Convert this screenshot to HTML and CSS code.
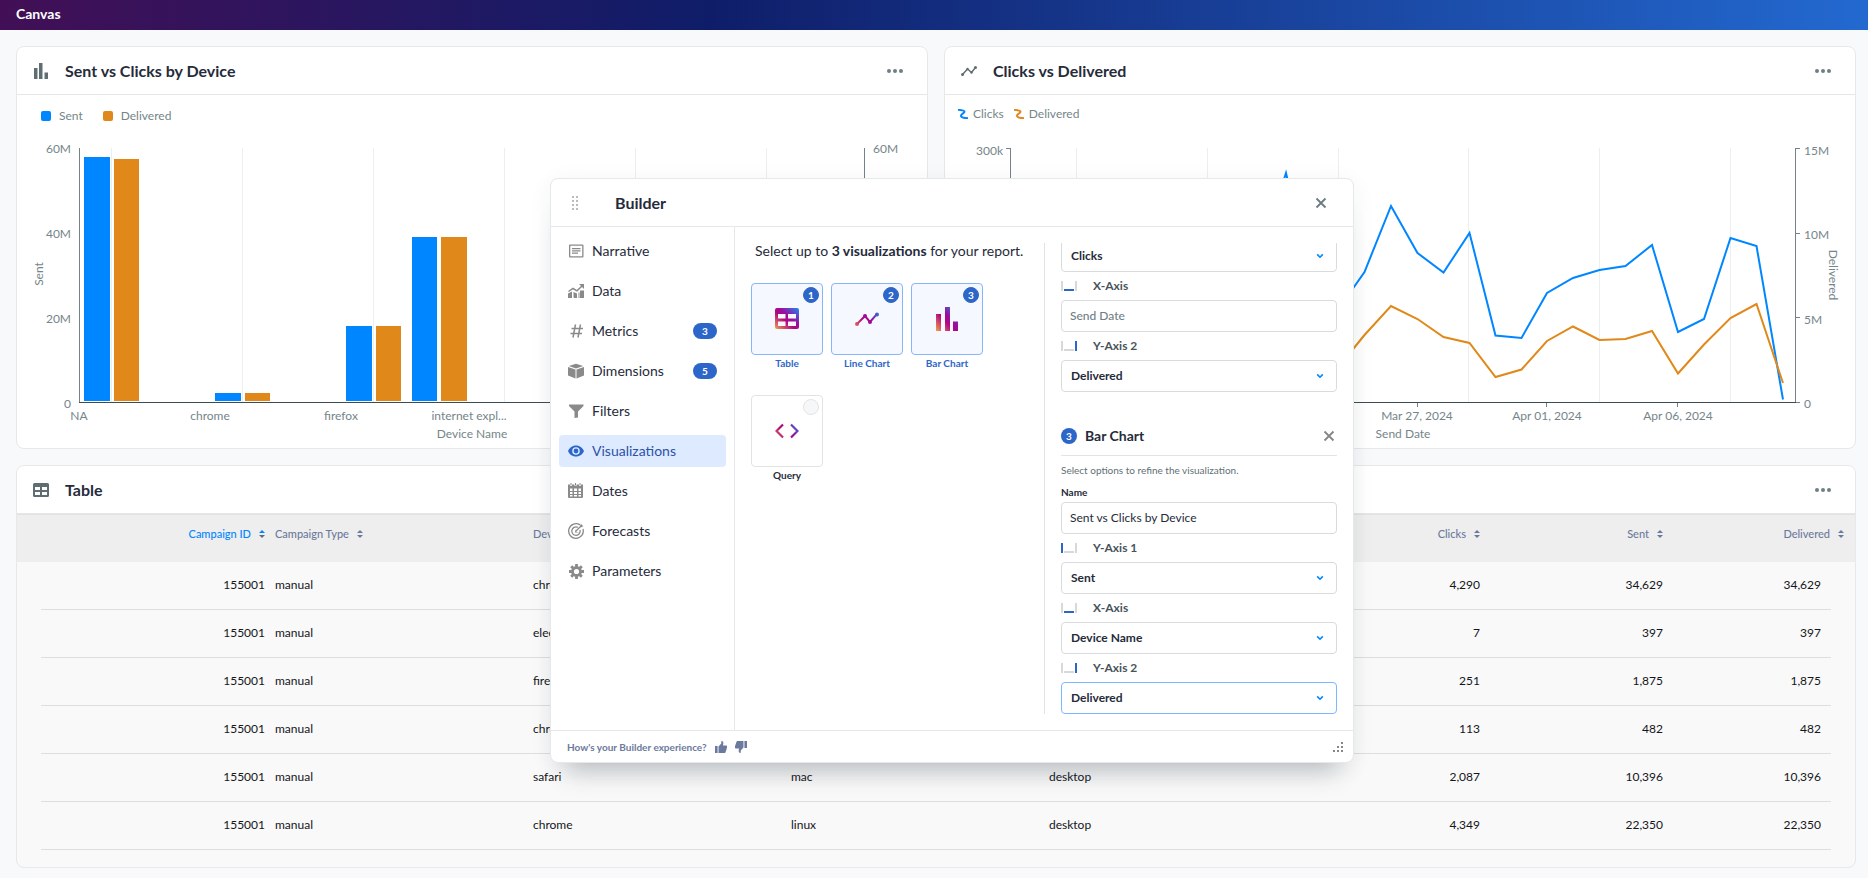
FILE: index.html
```html
<!DOCTYPE html>
<html lang="en">
<head>
<meta charset="utf-8">
<title>Canvas</title>
<link rel="stylesheet" href="styles.css">
</head>
<body>
<svg class="defs" aria-hidden="true">
  <defs>
    <linearGradient id="brand" x1="0" y1="1" x2="1" y2="0">
      <stop offset="0" stop-color="#f0a04b"/>
      <stop offset="0.42" stop-color="#b3067f"/>
      <stop offset="0.58" stop-color="#9c0c9c"/>
      <stop offset="1" stop-color="#1e88f5"/>
    </linearGradient>
    <linearGradient id="brand-wide" gradientUnits="userSpaceOnUse" x1="0" y1="22" x2="24" y2="4">
      <stop offset="0" stop-color="#e8804e"/>
      <stop offset="0.4" stop-color="#b3067f"/>
      <stop offset="0.6" stop-color="#9c0c9c"/>
      <stop offset="1" stop-color="#2b7ae6"/>
    </linearGradient>
    <symbol id="i-more" viewBox="0 0 16 4"><circle cx="2" cy="2" r="2"/><circle cx="8" cy="2" r="2"/><circle cx="14" cy="2" r="2"/></symbol>
    <symbol id="i-chevron" viewBox="0 0 8 6"><path d="M1.2 1.4 4 4.2 6.800 1.400" fill="none" stroke="currentColor" stroke-width="1.600"/></symbol>
    <symbol id="i-close" viewBox="0 0 12 12"><path d="M1.500 1.500 10.500 10.500M10.500 1.500 1.500 10.500" fill="none" stroke="currentColor" stroke-width="1.800"/></symbol>
    <symbol id="i-up" viewBox="0 0 6 3"><path d="M0 3 3 0 6 3z"/></symbol>
    <symbol id="i-down" viewBox="0 0 6 3"><path d="M0 0 3 3 6 0z"/></symbol>
  </defs>
</svg>

<header class="topbar"><h1 class="topbar-title">Canvas</h1></header>

<main class="board">
  <section class="card">
    <div class="card-head">
      <svg class="card-icon" viewBox="0 0 16 16"><path d="M1 5h3.500v11H1zM6 0h3.500v16H6zM11.500 9.500H15V16h-3.500z"/></svg>
      <h2 class="card-title">Sent vs Clicks by Device</h2>
      <button class="more" aria-label="More options"><svg class="more-icon"><use href="#i-more"/></svg></button>
    </div>
    <div class="legend legend-bars">
      <span class="key"><i class="swatch blue"></i>Sent</span>
      <span class="key"><i class="swatch orange"></i>Delivered</span>
    </div>
    <svg class="chart" viewBox="0 0 910 313" role="img" aria-label="Sent and delivered by device">
      <path class="grid" d="M94.500 13V267M225.500 13V267M356.500 13V267M487.500 13V267M618.500 13V267M749.500 13V267"/>
      <g class="bar-blue">
        <rect x="67" y="22" width="26" height="244"/><rect x="198" y="258" width="26" height="8"/>
        <rect x="329" y="191" width="26" height="75"/><rect x="395" y="102" width="25" height="164"/>
      </g>
      <g class="bar-orange">
        <rect x="97" y="24" width="25" height="242"/><rect x="228" y="258" width="25" height="8"/>
        <rect x="359" y="191" width="25" height="75"/><rect x="424" y="102" width="26" height="164"/>
      </g>
      <path class="axis" d="M62.500 13V267M847.500 13V267"/>
      <path class="base" d="M62 267.500H848"/>
      <g class="end"><text x="54" y="18">60M</text><text x="54" y="103">40M</text><text x="54" y="188">20M</text><text x="54" y="273">0</text></g>
      <text x="856" y="18">60M</text>
      <g class="mid">
        <text x="62" y="285">NA</text><text x="193" y="285">chrome</text><text x="324" y="285">firefox</text>
        <text x="452" y="285">internet expl...</text><text x="455" y="303">Device Name</text>
        <text transform="translate(26 139) rotate(-90)">Sent</text>
      </g>
    </svg>
  </section>

  <section class="card">
    <div class="card-head">
      <svg class="card-icon" viewBox="0 0 16 16"><path d="M1.500 11.500 6.500 6 10.500 9.500 14.500 4.500" fill="none" stroke="currentColor" stroke-width="1.500"/><circle cx="1.500" cy="11.500" r="1.500"/><circle cx="6.500" cy="6" r="1.200"/><circle cx="10.500" cy="9.500" r="1.200"/><circle cx="14.500" cy="4.500" r="1.500"/></svg>
      <h2 class="card-title">Clicks vs Delivered</h2>
      <button class="more" aria-label="More options"><svg class="more-icon"><use href="#i-more"/></svg></button>
    </div>
    <div class="legend legend-lines">
      <span class="key-line"><svg class="squiggle c-blue" viewBox="0 0 10 10"><path d="M0 .8C3 1 6.500 1.500 6.500 2.800 6.500 4.500 2.500 5 3 7 3.300 8.500 6 9 10 9.200"/></svg>Clicks</span>
      <span class="key-line"><svg class="squiggle c-orange" viewBox="0 0 10 10"><path d="M0 .8C3 1 6.500 1.500 6.500 2.800 6.500 4.500 2.500 5 3 7 3.300 8.500 6 9 10 9.200"/></svg>Delivered</span>
    </div>
    <svg class="chart" viewBox="0 0 910 313" role="img" aria-label="Clicks and delivered by send date">
      <path class="grid" d="M131.500 13V267M262.500 13V267M393.500 13V267M523.500 13V267M654.500 13V267M785.500 13V267"/>
      <path class="axis" d="M61 13.500H65.500V267M855 13.500H850.500V267.500H855M850.500 98.500H855M850.500 182.500H855M472.500 268V272M601.500 268V272M732.500 268V272"/>
      <path class="base" d="M65 267.500H851"/>
      <polyline class="line-blue" points="315,120 341,38 367,150 393.500,174 409,152 419.500,137 446,71 472.500,118 498.500,137.500 524.500,98 550.500,200.500 576.500,203 602,158 628,143 654.500,135 680.500,131 707,110 733,197 759,184 785.500,103 811.500,111 838,264.500"/>
      <polyline class="line-orange" points="393.500,232 419.500,200 446,171 472.500,184 498.500,202 524.500,208 550.500,242 576.500,234.500 602,206 628,191.500 654.500,205 680.500,204 707,196 733,238.500 759,209.500 785.500,183 811.500,169 838,248"/>
      <text class="end" x="58" y="20">300k</text>
      <text x="859" y="20">15M</text><text x="859" y="104">10M</text><text x="859" y="189">5M</text><text x="859" y="273">0</text>
      <g class="mid">
        <text x="472" y="285">Mar 27, 2024</text><text x="602" y="285">Apr 01, 2024</text><text x="733" y="285">Apr 06, 2024</text>
        <text x="458" y="303">Send Date</text>
        <text transform="translate(884 140) rotate(90)">Delivered</text>
      </g>
    </svg>
  </section>

  <section class="card card-table">
    <div class="card-head">
      <svg class="card-icon" viewBox="0 0 16 16"><path fill-rule="evenodd" d="M1.500 1h13A1.500 1.500 0 0 1 16 2.500v11a1.500 1.500 0 0 1-1.500 1.500h-13A1.500 1.500 0 0 1 0 13.500v-11A1.500 1.500 0 0 1 1.500 1zM2 5v3h5V5zm7 0v3h5V5zM2 10v3h5v-3zm7 0v3h5v-3z"/></svg>
      <h2 class="card-title">Table</h2>
      <button class="more" aria-label="More options"><svg class="more-icon"><use href="#i-more"/></svg></button>
    </div>
    <table class="data">
      <colgroup><col class="c-id"><col class="c-text"><col class="c-text"><col class="c-text"><col class="c-text"><col class="c-num"><col class="c-num"><col></colgroup>
      <thead><tr>
        <th class="num sorted" scope="col"><span class="th">Campaign ID<span class="sort"><svg><use href="#i-up"/></svg><svg><use href="#i-down"/></svg></span></span></th>
        <th scope="col"><span class="th">Campaign Type<span class="sort"><svg><use href="#i-up"/></svg><svg><use href="#i-down"/></svg></span></span></th>
        <th scope="col"><span class="th">Device Name<span class="sort"><svg><use href="#i-up"/></svg><svg><use href="#i-down"/></svg></span></span></th>
        <th></th>
        <th></th>
        <th class="num" scope="col"><span class="th">Clicks<span class="sort"><svg><use href="#i-up"/></svg><svg><use href="#i-down"/></svg></span></span></th>
        <th class="num" scope="col"><span class="th">Sent<span class="sort"><svg><use href="#i-up"/></svg><svg><use href="#i-down"/></svg></span></span></th>
        <th class="num last" scope="col"><span class="th">Delivered<span class="sort"><svg><use href="#i-up"/></svg><svg><use href="#i-down"/></svg></span></span></th>
      </tr></thead>
      <tbody>
        <tr><td class="num">155001</td><td>manual</td><td>chrome</td><td></td><td></td><td class="num">4,290</td><td class="num">34,629</td><td class="num last">34,629</td></tr>
        <tr><td class="num">155001</td><td>manual</td><td>electron</td><td></td><td></td><td class="num">7</td><td class="num">397</td><td class="num last">397</td></tr>
        <tr><td class="num">155001</td><td>manual</td><td>firefox</td><td></td><td></td><td class="num">251</td><td class="num">1,875</td><td class="num last">1,875</td></tr>
        <tr><td class="num">155001</td><td>manual</td><td>chrome</td><td></td><td></td><td class="num">113</td><td class="num">482</td><td class="num last">482</td></tr>
        <tr><td class="num">155001</td><td>manual</td><td>safari</td><td>mac</td><td>desktop</td><td class="num">2,087</td><td class="num">10,396</td><td class="num last">10,396</td></tr>
        <tr><td class="num">155001</td><td>manual</td><td>chrome</td><td>linux</td><td>desktop</td><td class="num">4,349</td><td class="num">22,350</td><td class="num last">22,350</td></tr>
      </tbody>
    </table>
  </section>
</main>

<div class="modal" role="dialog" aria-labelledby="builder-title">
  <div class="modal-head">
    <svg class="drag" viewBox="0 0 6 14"><path d="M0 0h2v2H0zM4 0h2v2H4zM0 4h2v2H0zM4 4h2v2H4zM0 8h2v2H0zM4 8h2v2H4zM0 12h2v2H0zM4 12h2v2H4z"/></svg>
    <h2 class="modal-title" id="builder-title">Builder</h2>
    <button class="close" aria-label="Close builder"><svg class="close-icon"><use href="#i-close"/></svg></button>
  </div>

  <div class="modal-body">
    <nav class="side" aria-label="Builder sections">
      <button class="item"><svg viewBox="0 0 16 16"><path fill-rule="evenodd" d="M2 1.500h12.500a1 1 0 0 1 1 1v11a1 1 0 0 1-1 1H2a1 1 0 0 1-1-1v-11a1 1 0 0 1 1-1zM2.300 2.800v10.400h11.900V2.800zM4 5h8.500v1.200H4zm0 2.300h8.500v1.200H4zm0 2.300h6v1.200H4z"/></svg>Narrative</button>
      <button class="item"><svg viewBox="0 0 16 16"><path d="M0 10.500 4 8.500V15H0zM5.500 9l3.500 1.500V15H6.500a1 1 0 0 1-1-1zM10.500 9.500h1V15h-1zM12 7.500h4V15h-4z"/><path d="M.5 8.500 5 5.500l4 2.300L14 3" fill="none" stroke="currentColor" stroke-width="1.500"/><path d="M11 1h5v5z"/></svg>Data</button>
      <button class="item"><svg viewBox="0 0 16 16"><path d="M7.500 1.500 5 14.500M12.500 1.500 10 14.500M3.500 5.500h11.500M2.500 10.500h11.500" fill="none" stroke="currentColor" stroke-width="1.500"/></svg>Metrics<span class="count">3</span></button>
      <button class="item"><svg viewBox="0 0 16 16"><path d="M8 .8 15.200 3 8 5.400.8 3zM0 4l7.500 2.400V15.500L0 12.500zM16 4 8.500 6.400V15.500L16 12.500z"/></svg>Dimensions<span class="count">5</span></button>
      <button class="item"><svg viewBox="0 0 16 16"><path d="M1 1.500h14.500v1.500L10 8.500v6L6.500 15V8.500L1 3z"/></svg>Filters</button>
      <button class="item active" aria-current="page"><svg viewBox="0 0 16 16"><path fill-rule="evenodd" d="M8 2.500c4 0 6.800 2.500 8 5.500-1.200 3-4 5.500-8 5.500S1.200 11 0 8c1.200-3 4-5.500 8-5.500zm0 1.700a3.800 3.800 0 1 0 0 7.600 3.800 3.800 0 0 0 0-7.600z"/><circle cx="8" cy="8" r="2.400"/></svg>Visualizations</button>
      <button class="item"><svg viewBox="0 0 16 16"><path fill-rule="evenodd" d="M0 1.500h2V3h2V1.500h2.500V3h2V1.500H11V3h2V1.500h2V14a1 1 0 0 1-1 1H1a1 1 0 0 1-1-1zM2 5.500V8h2.500V5.500zm4 0V8h3V5.500zm4.500 0V8H13V5.500zM2 9v2h2.500V9zm4 0v2h3V9zm4.500 0v2H13V9zM2 12v1.500h2.500V12zm4 0v1.500h3V12zm4.500 0v1.500H13V12z"/><path d="M2.500 0h1v2.500h-1zM7 0h1v2.500H7zM11.500 0h1v2.500h-1z"/></svg>Dates</button>
      <button class="item"><svg viewBox="0 0 16 16"><g fill="none" stroke="currentColor" stroke-width="1.300"><path d="M12 1.900A7.300 7.300 0 1 0 15 6"/><path d="M9.800 4.400A4.200 4.200 0 1 0 12 7"/><path d="M7.500 8.500 14 2"/></g><path d="M12 3.500 13 .5 13.800 2.200 15.500 3 12.800 4.500zM7 5.500v4h4L7.500 8.500z"/></svg>Forecasts</button>
      <button class="item"><svg viewBox="0 0 16 16"><circle cx="8.500" cy="8.500" r="4" fill="none" stroke="currentColor" stroke-width="2.800"/><path d="M8.500 1v3M8.500 13v3M1 8.500h3M13 8.500h3M3.200 3.200l2 2M11.800 11.800l2 2M3.200 13.800l2-2M11.800 5.200l2-2" fill="none" stroke="currentColor" stroke-width="2.800"/></svg>Parameters</button>
    </nav>

    <div class="center">
      <p class="hint">Select up to <strong>3 visualizations</strong> for your report.</p>
      <div class="tiles">
        <button class="tile on"><span class="box"><svg viewBox="0 0 24 24"><path fill="url(#brand)" fill-rule="evenodd" d="M2 1h20a2 2 0 0 1 2 2v17a2 2 0 0 1-2 2H2a2 2 0 0 1-2-2V3a2 2 0 0 1 2-2zM3 7v4.500h7.500V7zm10 0v4.500h8V7zM3 14.500V19h7.500v-4.500zm10 0V19h8v-4.500z"/></svg><span class="pick">1</span></span>Table</button>
        <button class="tile on"><span class="box"><svg viewBox="0 0 24 24"><path d="M2 17 10 9l5 6 7-8" fill="none" stroke="url(#brand-wide)" stroke-width="2"/><g fill="url(#brand-wide)"><circle cx="2" cy="17" r="2"/><circle cx="10" cy="9" r="2"/><circle cx="15" cy="15" r="2"/><circle cx="22" cy="7.500" r="2"/></g></svg><span class="pick">2</span></span>Line Chart</button>
        <button class="tile on"><span class="box"><svg viewBox="0 0 24 24"><path fill="url(#brand)" d="M1 7h5v17H1zM10 0h5v24h-5zM18 14.500h5V24h-5z"/></svg><span class="pick">3</span></span>Bar Chart</button>
        <button class="tile"><span class="box"><svg viewBox="0 0 24 24"><path d="M8 5.500 1.500 12 8 18.500M16 5.500 22.500 12 16 18.500" fill="none" stroke="url(#brand-wide)" stroke-width="2.200"/></svg><span class="pick"></span></span>Query</button>
      </div>
    </div>

    <div class="options">
      <div class="select"><select aria-label="Line chart first axis"><option>Clicks</option></select><svg class="chev"><use href="#i-chevron"/></svg></div>
      <div class="field">
        <label class="axis-label" for="l-x"><span class="mark x"></span>X-Axis</label>
        <input class="text" id="l-x" placeholder="Send Date" disabled>
      </div>
      <div class="field">
        <label class="axis-label" for="l-y2"><span class="mark y2"></span>Y-Axis 2</label>
        <div class="select"><select id="l-y2"><option>Delivered</option></select><svg class="chev"><use href="#i-chevron"/></svg></div>
      </div>

      <div class="group-head">
        <span class="num-badge">3</span>
        <h3 class="group-title">Bar Chart</h3>
        <button class="remove" aria-label="Remove bar chart"><svg class="close-icon"><use href="#i-close"/></svg></button>
      </div>
      <p class="note">Select options to refine the visualization.</p>
      <label class="name-label" for="b-name">Name</label>
      <input class="text" id="b-name" value="Sent vs Clicks by Device">
      <div class="field">
        <label class="axis-label" for="b-y1"><span class="mark y1"></span>Y-Axis 1</label>
        <div class="select"><select id="b-y1"><option>Sent</option></select><svg class="chev"><use href="#i-chevron"/></svg></div>
      </div>
      <div class="field">
        <label class="axis-label" for="b-x"><span class="mark x"></span>X-Axis</label>
        <div class="select"><select id="b-x"><option>Device Name</option></select><svg class="chev"><use href="#i-chevron"/></svg></div>
      </div>
      <div class="field">
        <label class="axis-label" for="b-y2"><span class="mark y2"></span>Y-Axis 2</label>
        <div class="select current"><select id="b-y2"><option>Delivered</option></select><svg class="chev"><use href="#i-chevron"/></svg></div>
      </div>
    </div>
  </div>

  <div class="modal-foot">
    <span>How's your Builder experience?</span>
    <button class="thumb" aria-label="Good"><svg viewBox="0 0 12 12"><path d="M0 5h2.600v7H0zM3.500 5.500 6.300 2.500V0C8 0 8.500 1 8.300 2.500L8 4.500h3.200a.8.800 0 0 1 .8.800v1.500l-1.500 4.500a1 1 0 0 1-1 .7H3.500z"/></svg></button>
    <button class="thumb" aria-label="Bad"><svg viewBox="0 0 12 12"><path d="M12 7H9.400V0H12zM8.500 6.500 5.700 9.500V12C4 12 3.500 11 3.700 9.500L4 7.500H.8A.8.800 0 0 1 0 6.700V5.200L1.500.7a1 1 0 0 1 1-.7h6z"/></svg></button>
    <svg class="resize" viewBox="0 0 10 10"><path d="M8 0h2v2H8zM4 4h2v2H4zM8 4h2v2H8zM0 8h2v2H0zM4 8h2v2H4zM8 8h2v2H8z"/></svg>
  </div>
</div>
</body>
</html>
```

FILE: styles.css
```css
* { box-sizing: border-box; }
body {
  margin: 0;
  min-height: 100vh;
  position: relative;
  background: #f8f9fb;
  color: #262b3a;
  font-family: Lato, "Open Sans", sans-serif;
  font-size: 12px;
  line-height: 16px;
}
h1, h2, h3, p { margin: 0; }
button { margin: 0; padding: 0; border: 0; background: none; font: inherit; color: inherit; cursor: pointer; }
svg { display: block; fill: currentColor; }
.defs { position: absolute; width: 0; height: 0; }

.topbar {
  display: flex;
  align-items: center;
  height: 30px;
  padding: 0 16px 2px;
  background: linear-gradient(90deg, #420f56 0%, #0f1d69 38%, #2369d0 100%);
}
.topbar-title { color: #fff; font-size: 14px; font-weight: 700; line-height: 16px; }

.board {
  display: grid;
  grid-template-columns: 1fr 1fr;
  gap: 16px;
  padding: 16px 12px 10px 16px;
}
.card { min-width: 0; border: 1px solid #e6e8ea; border-radius: 8px; background: #fff; overflow: hidden; }
.card-head { display: flex; align-items: center; height: 48px; padding: 0 24px 0 16px; border-bottom: 1px solid #e4e6e7; }
.card-icon { width: 16px; height: 16px; color: #5f6e72; }
.card-title { flex: 1; margin-left: 16px; font-size: 16px; font-weight: 700; line-height: 20px; }
.more { display: flex; align-items: center; height: 24px; color: #6f7f84; }
.more-icon { width: 16px; height: 4px; }

.legend { display: flex; height: 40px; color: #758589; }
.legend-bars { gap: 20px; padding: 13px 24px; }
.legend-lines { gap: 10px; padding: 11px 13px; }
.key, .key-line { display: flex; align-items: center; height: 16px; }
.key { gap: 8px; }
.key-line { gap: 5px; }
.swatch { width: 10px; height: 10px; border-radius: 2px; }
.blue { background: #0086ff; }
.orange { background: #e0891a; }
.squiggle { width: 10px; height: 10px; fill: none; stroke: currentColor; stroke-width: 2; }
.c-blue { color: #0086ff; }
.c-orange { color: #e0891a; }

.chart { width: 100%; height: auto; fill: #758589; font-size: 12px; }
.grid, .axis, .base { fill: none; shape-rendering: crispEdges; }
.grid { stroke: #eceff0; }
.axis { stroke: #72838a; }
.base { stroke: #3b4d54; }
.bar-blue { fill: #0086ff; }
.bar-orange { fill: #e0891a; }
.line-blue, .line-orange { fill: none; stroke-width: 2; }
.line-blue { stroke: #0086ff; }
.line-orange { stroke: #e0891a; }
.end { text-anchor: end; }
.mid { text-anchor: middle; }

.card-table { grid-column: 1 / -1; background: #f9f9f9; padding-bottom: 17px; }
.card-table .card-head { background: #fff; }
.data { width: 100%; table-layout: fixed; border-collapse: collapse; border-spacing: 0; }
.c-id { width: 253px; }
.c-text { width: 258px; }
.c-num { width: 183px; }
.data thead { background: #eee; }
.data th { height: 48px; padding: 12px 5px 0; vertical-align: top; text-align: left; font-size: 11px; font-weight: 500; color: #6b7a9c; box-shadow: inset 0 1px #e2e2e2; }
.data td { height: 48px; padding: 0 5px 2px; color: #14161a; font-size: 12px; }
.data .num { text-align: right; }
.data th.last { padding-right: 11px; }
.data td.last { padding-right: 34px; }
.data tbody tr { background: linear-gradient(#dedede, #dedede) no-repeat 24px 100% / calc(100% - 48px) 1px; }
.th { display: inline-flex; align-items: center; gap: 8px; }
.sort { display: flex; flex-direction: column; gap: 2px; }
.sort svg { width: 6px; height: 3px; }
.data .sorted { color: #0086ff; }
.sorted .sort svg + svg { color: #5c6a8c; }

.modal {
  position: absolute;
  top: 178px;
  left: 550px;
  width: 804px;
  border: 1px solid #e6e8e9;
  border-radius: 8px;
  background: #fff;
  box-shadow: 0 24px 24px -16px rgba(40, 55, 65, 0.28), 0 4px 24px rgba(40, 55, 65, 0.06);
}
.modal-head { display: flex; align-items: center; height: 48px; padding: 0 26px 0 21px; border-bottom: 1px solid #e6e8e9; }
.drag { width: 6px; height: 14px; color: #bcbcbc; }
.modal-title { flex: 1; margin-left: 37px; font-size: 16px; font-weight: 700; line-height: 20px; }
.close { color: #6b7c80; }
.close-icon { width: 12px; height: 12px; }

.modal-body { display: flex; height: 503px; }
.side { display: flex; flex-direction: column; gap: 8px; flex: 0 0 184px; padding: 8px; border-right: 1px solid #e6e8e9; }
.item { display: flex; align-items: center; gap: 8px; height: 32px; padding: 0 9px; border-radius: 4px; font-size: 14px; text-align: left; }
.item svg { width: 16px; height: 16px; color: #8a8a8a; }
.item.active { background: #deeaff; color: #2b52a5; }
.item.active svg { color: #2d66c9; }
.count { margin-left: auto; width: 24px; height: 16px; border-radius: 8px; background: #2d66c9; color: #fff; font-size: 10px; font-weight: 700; text-align: center; }

.center { flex: 1; padding: 16px; }
.hint { padding-left: 4px; font-size: 14px; white-space: nowrap; }
.hint strong { font-weight: 700; }
.tiles { display: grid; grid-template-columns: repeat(3, 72px); gap: 24px 8px; margin-top: 24px; }
.tile { display: flex; flex-direction: column; align-items: center; font-size: 10px; font-weight: 700; }
.tile.on { color: #2d66c9; }
.box { position: relative; display: flex; align-items: center; justify-content: center; width: 72px; height: 72px; border: 1px solid #e2e3e4; border-radius: 4px; }
.on .box { border-color: #86b5fa; background: #f5f8ff; }
.box svg { width: 24px; height: 24px; }
.pick { position: absolute; top: 3px; right: 3px; width: 16px; height: 16px; border: 1px solid #e2e4e6; border-radius: 8px; background: #f6f7f8; line-height: 14px; text-align: center; }
.on .pick { border-color: #2d66c9; background: #2d66c9; color: #fff; }

.options { display: flex; flex-direction: column; justify-content: flex-end; flex: 0 0 309px; margin: 16px 0; padding: 0 16px; border-left: 1px solid #e0e2e3; overflow: hidden; }
.options > * { flex-shrink: 0; }
.axis-label { display: flex; align-items: center; height: 28px; gap: 16px; font-weight: 700; color: #47545a; }
.mark { position: relative; width: 16px; height: 10px; border: solid #d8d8d8; border-width: 0 2px; }
.mark::after { content: ""; position: absolute; left: 1px; right: 1px; bottom: 0; height: 2px; background: #d8d8d8; }
.mark.y1 { border-left-color: #2d66c9; }
.mark.y2 { border-right-color: #2d66c9; }
.mark.x::after { background: #2d66c9; }
.select { position: relative; }
.select select, .text {
  display: block;
  width: 100%;
  height: 32px;
  border: 1px solid #d9dbdc;
  border-radius: 4px;
  background: #fff;
  color: #262b3a;
  font: 400 12px/16px Lato, "Open Sans", sans-serif;
}
.select select { appearance: none; padding: 0 32px 1px 9px; font-weight: 700; }
.text { padding: 0 8px 2px; }
.text:disabled { font-weight: 500; }
.text::placeholder { color: #6f8085; opacity: 1; }
.current select { border-color: #7ab8ff; }
.chev { position: absolute; top: 13px; right: 13px; width: 8px; height: 6px; color: #0086ff; }
.group-head { display: flex; align-items: center; height: 40px; margin-top: 24px; border-bottom: 1px solid #e2e4e5; }
.num-badge { width: 16px; height: 16px; border-radius: 8px; background: #2d66c9; color: #fff; font-size: 10px; font-weight: 700; text-align: center; }
.group-title { flex: 1; margin-left: 8px; font-size: 14px; font-weight: 700; line-height: 16px; }
.remove { margin-right: 2px; color: #868686; }
.note { margin-top: 6px; font-size: 10px; color: #5f7075; }
.name-label { margin: 6px 0 2px; font-size: 10px; font-weight: 700; }

.modal-foot { display: flex; align-items: center; gap: 8px; height: 32px; padding: 0 10px 0 16px; border-top: 1px solid #e6e8e9; color: #6b7a9c; font-size: 10px; font-weight: 700; }
.thumb svg { width: 12px; height: 12px; }
.resize { width: 10px; height: 10px; margin-left: auto; color: #868686; }
```
